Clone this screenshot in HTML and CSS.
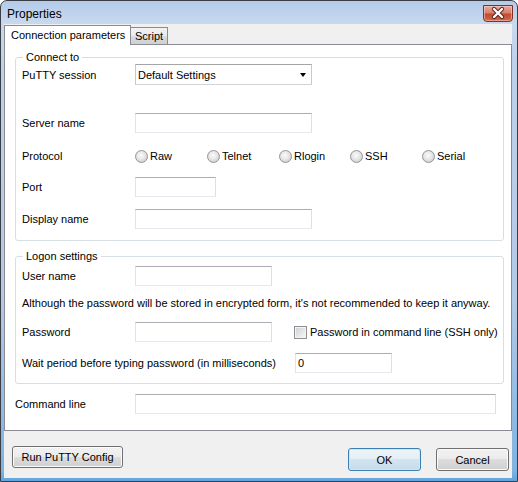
FILE: index.html
```html
<!DOCTYPE html>
<html>
<head>
<meta charset="utf-8">
<link rel="stylesheet" href="styles.css">
</head>
<body>
<div class="window">
  <div class="titlebar">
    <span class="title">Properties</span>
    <div class="close">
      <svg width="30" height="17" viewBox="0 0 30 17">
        <path d="M11 4 L19 12 M19 4 L11 12" stroke="#5a2018" stroke-width="4.2" stroke-linecap="round" fill="none"/>
        <path d="M11 4 L19 12 M19 4 L11 12" stroke="#ffffff" stroke-width="2.4" stroke-linecap="round" fill="none"/>
      </svg>
    </div>
  </div>
  <div class="client">
    <div class="tabs">
      <div class="tab active">Connection parameters</div>
      <div class="tab">Script</div>
    </div>
    <div class="panel">
      <div class="group connect">
        <span class="legend">Connect to</span>
        <div class="row r1">
          <span class="lbl">PuTTY session</span>
          <div class="combo"><span>Default Settings</span><span class="arrow"></span></div>
        </div>
        <div class="row r2">
          <span class="lbl">Server name</span>
          <div class="input w177"></div>
        </div>
        <div class="row r3">
          <span class="lbl">Protocol</span>
          <div class="radios">
            <span class="radio"><span class="dot"></span>Raw</span>
            <span class="radio"><span class="dot"></span>Telnet</span>
            <span class="radio"><span class="dot"></span>Rlogin</span>
            <span class="radio"><span class="dot"></span>SSH</span>
            <span class="radio"><span class="dot"></span>Serial</span>
          </div>
        </div>
        <div class="row r4">
          <span class="lbl">Port</span>
          <div class="input w81"></div>
        </div>
        <div class="row r5">
          <span class="lbl">Display name</span>
          <div class="input w177"></div>
        </div>
      </div>
      <div class="group logon">
        <span class="legend">Logon settings</span>
        <div class="row l1">
          <span class="lbl">User name</span>
          <div class="input w137"></div>
        </div>
        <div class="note">Although the password will be stored in encrypted form, it's not recommended to keep it anyway.</div>
        <div class="row l3">
          <span class="lbl">Password</span>
          <div class="input w137"></div>
          <span class="check"><span class="box"></span>Password in command line (SSH only)</span>
        </div>
        <div class="row wait">
          <span class="lbl">Wait period before typing password (in milliseconds)</span>
          <div class="input w97"><span>0</span></div>
        </div>
      </div>
      <div class="row cmd">
        <span class="lbl">Command line</span>
        <div class="input wfull"></div>
      </div>
    </div>
    <div class="buttons">
      <div class="btn run">Run PuTTY Config</div>
      <div class="spacer"></div>
      <div class="btn ok">OK</div>
      <div class="btn cancel">Cancel</div>
    </div>
  </div>
</div>
</body>
</html>
```
FILE: styles.css
```css
html, body {
  margin: 0;
  padding: 0;
  background: #ffffff;
}
body {
  font-family: "Liberation Sans", Arial, sans-serif;
  font-size: 11px;
  color: #000;
}
.window {
  width: 518px;
  height: 482px;
  box-sizing: border-box;
  border: 1px solid #3b3f45;
  border-radius: 7px 7px 0 0;
  background: linear-gradient(180deg, #b4cbe8 0px, #c8d9ef 22px, #bdd1ea 60px, #b2c9e7 300px, #7fb3e0 470px, #5aa2dc 482px);
  padding: 0 5px 3px 3px;
  display: flex;
  flex-direction: column;
}
.titlebar {
  height: 23px;
  display: flex;
  justify-content: space-between;
  align-items: flex-start;
  flex: none;
}
.title {
  font-size: 12px;
  margin-top: 6px;
  margin-left: 3px;
  color: #000;
}
.close {
  width: 30px;
  height: 17px;
  margin-top: 4px;
  margin-right: -1px;
  box-sizing: border-box;
  border: 1px solid #7a3326;
  border-radius: 0 0 4px 4px;
  background: linear-gradient(180deg, #e9a99a 0%, #d9806c 45%, #c24a30 55%, #cf6a4c 100%);
  box-shadow: inset 0 0 0 1px rgba(255,220,210,0.5);
  display: flex;
  align-items: center;
  justify-content: center;
}
.close svg {
  display: block;
  margin: -1px;
}
.client {
  flex: 1;
  background: #f0f0f0;
  display: flex;
  flex-direction: column;
}
.tabs {
  height: 20px;
  display: flex;
  align-items: flex-end;
  flex: none;
  position: relative;
  z-index: 2;
}
.tab {
  box-sizing: border-box;
  height: 17px;
  border: 1px solid #898c95;
  border-bottom: none;
  background: linear-gradient(180deg, #f2f2f2 0%, #ebebeb 50%, #dddddd 50%, #cfcfcf 100%);
  padding: 2px 4px 0 4px;
  line-height: 13px;
  margin-left: -1px;
  white-space: nowrap;
}
.tab.active {
  margin-left: 0;
  margin-bottom: -1px;
  background: #ffffff;
  padding: 3px 4px 0 6px;
  width: 127px;
  height: 20px;
  position: relative;
  z-index: 3;
}
.panel {
  background: #ffffff;
  border: 1px solid #898c95;
  padding: 12px 7px 16px 10px;
  position: relative;
  z-index: 1;
}
.group {
  border: 1px solid #d5dfe5;
  border-radius: 3px;
  position: relative;
  padding: 0 6px 10px 6px;
}
.group.connect {
  padding-bottom: 11px;
}
.group.logon {
  margin-top: 15px;
}
.legend {
  position: absolute;
  top: -7px;
  left: 7px;
  background: #ffffff;
  padding: 0 3px;
  line-height: 13px;
  white-space: nowrap;
}
.row {
  display: grid;
  grid-template-columns: 113px auto;
  align-items: center;
  height: 20px;
  white-space: nowrap;
}
.r1 { margin-top: 6px; height: 21px; }
.r2 { margin-top: 28px; }
.r3 { margin-top: 13px; }
.r4 { margin-top: 11px; }
.r5 { margin-top: 12px; }
.l1 { margin-top: 9px; }
.note {
  margin-top: 10px;
  height: 14px;
  line-height: 14px;
  white-space: nowrap;
}
.l3 {
  margin-top: 12px;
  grid-template-columns: 113px 160px auto;
}
.wait {
  margin-top: 11px;
  grid-template-columns: 273px auto;
}
.cmd {
  margin-top: 10px;
  grid-template-columns: 120px auto;
}
.input, .combo {
  box-sizing: border-box;
  height: 20px;
  border: 1px solid;
  border-color: #abadb3 #dbdfe6 #e3e9ef #e2e3ea;
  background: #fff;
}
.input span {
  display: block;
  padding-left: 2px;
  line-height: 18px;
}
.combo {
  width: 177px;
  height: 21px;
  border-color: #a5a5a5 #c9c9c9 #d3d3d3 #c9c9c9;
  display: flex;
  align-items: center;
  justify-content: space-between;
  padding: 0 5px 0 2px;
}
.arrow {
  width: 0;
  height: 0;
  border-left: 3.5px solid transparent;
  border-right: 3.5px solid transparent;
  border-top: 4px solid #000;
  margin-top: 1px;
}
.w177 { width: 177px; }
.w81 { width: 81px; }
.w137 { width: 137px; }
.w97 { width: 97px; }
.wfull { width: 361px; height: 20px; }
.radios {
  display: grid;
  grid-template-columns: 72px 72px 71px 72px auto;
  align-items: center;
}
.radio {
  display: flex;
  align-items: center;
}
.dot {
  box-sizing: border-box;
  width: 13px;
  height: 13px;
  border-radius: 50%;
  border: 1px solid #959697;
  background: radial-gradient(circle at 45% 40%, #fbfbfb 0%, #e6e6e6 45%, #d4d4d4 70%, #f4f4f4 100%);
  margin-right: 2px;
  margin-top: 1px;
}
.check {
  display: flex;
  align-items: center;
  margin-left: -1px;
  white-space: nowrap;
}
.box {
  box-sizing: border-box;
  width: 13px;
  height: 13px;
  border: 1px solid #8e8f8f;
  background: linear-gradient(135deg, #cbcfd5 0%, #e8e9eb 60%, #f6f6f6 100%);
  box-shadow: inset 0 0 0 1px #f4f4f4;
  margin-right: 3px;
  flex: none;
}
.buttons {
  flex: 1;
  display: flex;
  align-items: flex-start;
  padding: 15px 3px 0 8px;
}
.spacer {
  flex: 1;
}
.btn {
  box-sizing: border-box;
  height: 22px;
  border: 1px solid #707070;
  border-radius: 3px;
  background: linear-gradient(180deg, #f2f2f2 0%, #ebebeb 50%, #dddddd 50%, #cfcfcf 100%);
  box-shadow: inset 0 0 0 1px #fbfbfb;
  display: flex;
  align-items: center;
  justify-content: center;
  white-space: nowrap;
}
.run {
  width: 111px;
}
.ok, .cancel {
  width: 73px;
  height: 23px;
  margin-top: 2px;
}
.cancel {
  margin-left: 15px;
}
.ok {
  border-color: #3c7fb1;
  background: linear-gradient(180deg, #eef5fa 0%, #e3eef6 50%, #d3e4f0 50%, #c6dbeb 100%);
  box-shadow: inset 0 0 0 1px #c6ecfa;
}
```
